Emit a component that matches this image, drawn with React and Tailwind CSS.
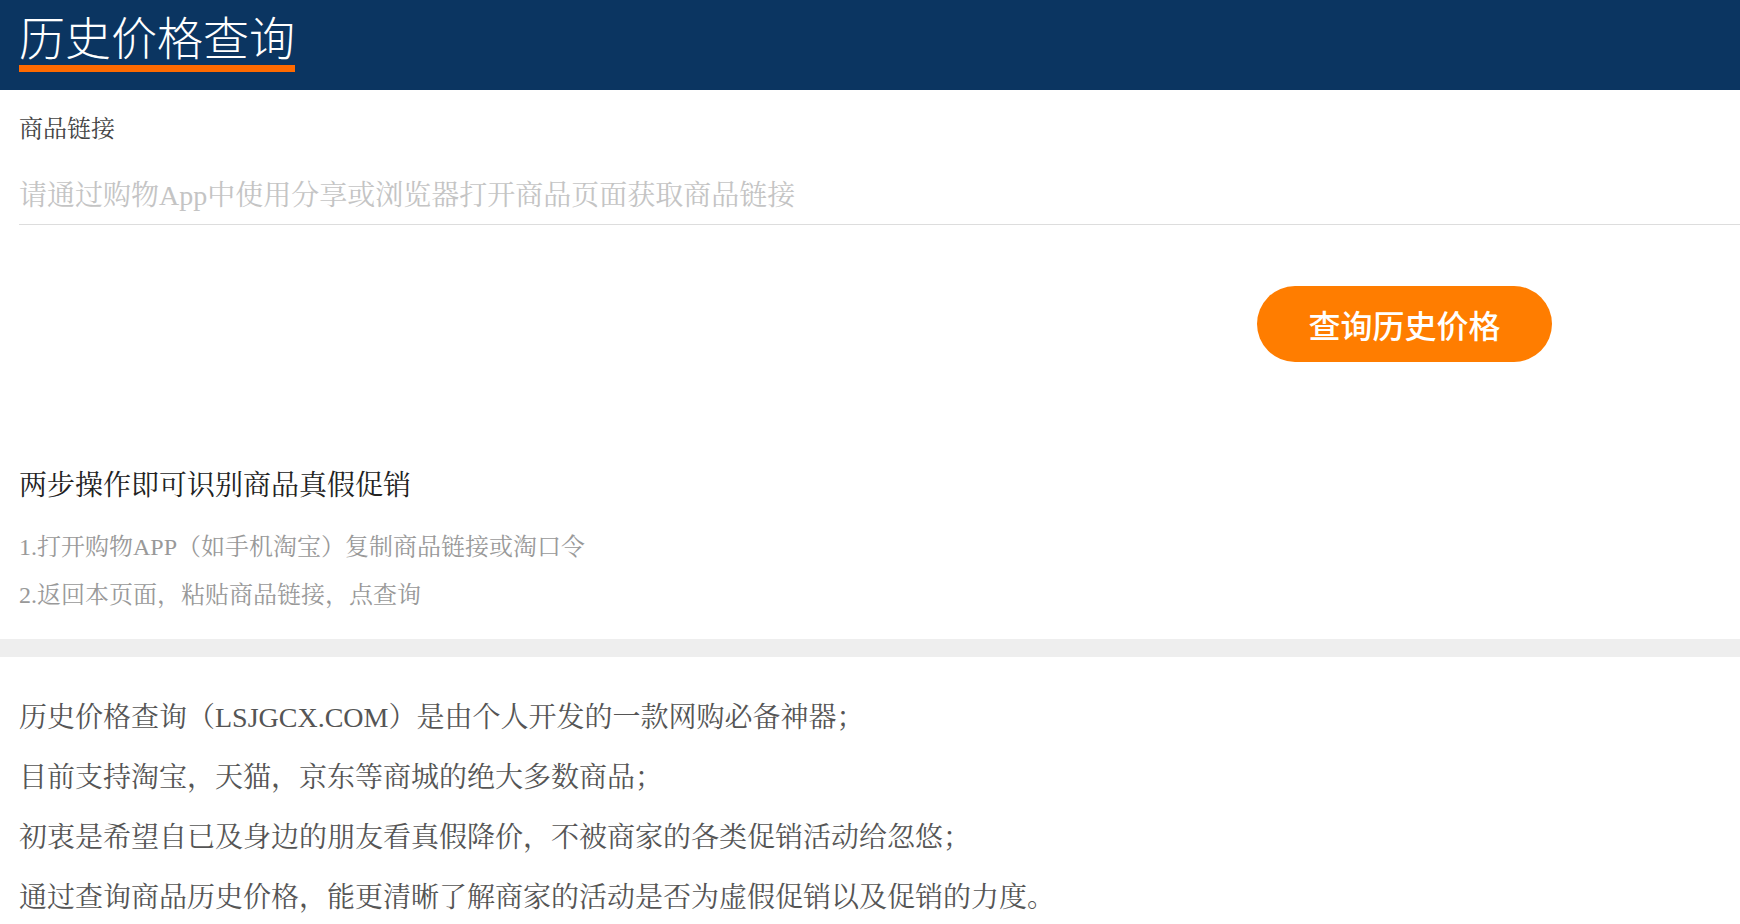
import React from "react";

const serif = {
  fontFamily:
    '"Liberation Serif", "Noto Serif CJK SC", "Noto Sans CJK SC", serif',
};
const sans = {
  fontFamily: '"Noto Sans CJK SC", "Noto Sans", sans-serif',
};

const intro = [
  "历史价格查询（LSJGCX.COM）是由个人开发的一款网购必备神器；",
  "目前支持淘宝，天猫，京东等商城的绝大多数商品；",
  "初衷是希望自已及身边的朋友看真假降价，不被商家的各类促销活动给忽悠；",
  "通过查询商品历史价格，能更清晰了解商家的活动是否为虚假促销以及促销的力度。",
];

export default function App() {
  return (
    <div className="min-h-[924px] w-full bg-white" style={serif}>
      {/* top bar */}
      <header className="h-[90px] bg-[#0b3561] pl-[19px] pt-[12px]">
        <h1
          className="inline-block border-b-[7px] border-[#ff6a00] pb-[7px] text-[46px] font-extralight leading-[46px] text-white"
          style={sans}
        >
          历史价格查询
        </h1>
      </header>

      {/* link form */}
      <section className="pl-[19px] pt-[27px]">
        <label className="block text-[24px] leading-[24px] text-[#444]">
          商品链接
        </label>
        <input
          type="text"
          placeholder="请通过购物App中使用分享或浏览器打开商品页面获取商品链接"
          className="mt-[22px] block h-[62px] w-full border-b border-[#dddddd] bg-transparent pt-[4px] text-[28px] text-[#333] outline-none placeholder:text-[#c4c4c4]"
          style={serif}
        />
        <div className="flex justify-end pr-[188px] pt-[61px]">
          <button
            type="button"
            className="flex h-[76px] w-[295px] items-center justify-center rounded-full bg-[#ff7d00] text-[32px] font-medium text-white"
            style={sans}
          >
            查询历史价格
          </button>
        </div>

        <h2 className="pt-[110px] text-[28px] leading-[28px] text-[#222]">
          两步操作即可识别商品真假促销
        </h2>
        <ol className="mt-[23px] pb-[20px] text-[24px] leading-[48px] text-[#999]">
          <li>1.打开购物APP（如手机淘宝）复制商品链接或淘口令</li>
          <li>2.返回本页面，粘贴商品链接，点查询</li>
        </ol>
      </section>

      <div className="h-[18px] bg-[#eeeeee]" />

      {/* about */}
      <section className="pl-[19px] pt-[31px] text-[28px] leading-[60px] text-[#555]">
        {intro.map((line) => (
          <p key={line}>{line}</p>
        ))}
      </section>
    </div>
  );
}
